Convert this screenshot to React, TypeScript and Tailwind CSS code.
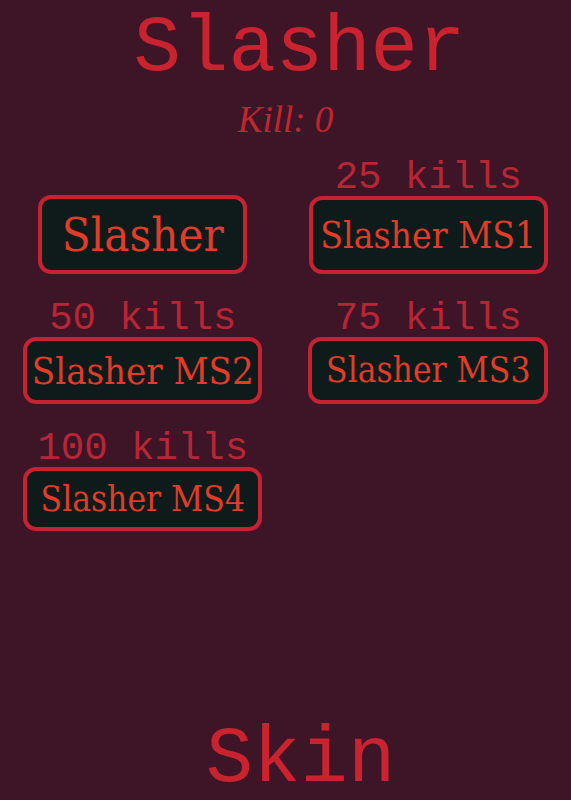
import React from "react";

type Skin = {
  name: string;
  kills?: number;
  size: string;
  text: string;
};

const skins: Skin[] = [
  { name: "Slasher", size: "w-[209px] h-[79px]", text: "text-[47px]" },
  { name: "Slasher MS1", kills: 25, size: "w-[239px] h-[78px]", text: "text-[37px]" },
  { name: "Slasher MS2", kills: 50, size: "w-[239px] h-[67px]", text: "text-[38px]" },
  { name: "Slasher MS3", kills: 75, size: "w-[240px] h-[67px]", text: "text-[35px]" },
  { name: "Slasher MS4", kills: 100, size: "w-[239px] h-[64px]", text: "text-[35px]" },
];

const serif = "font-['DejaVu_Serif_Condensed','DejaVu_Serif','Liberation_Serif',serif]";

function SkinCard({ skin }: { skin: Skin }) {
  return (
    <div className="flex flex-col items-center">
      {skin.kills !== undefined && (
        <div className="font-['Liberation_Mono',monospace] text-[39px] leading-[32px] text-[#b82535] mb-[2px]">
          {skin.kills} kills
        </div>
      )}
      <button
        className={`${skin.size} flex items-center justify-center rounded-[13px] border-[4px] border-[#c62232] bg-[#0f1b1a] ${serif} ${skin.text} leading-none text-[#e03c28]`}
      >
        {skin.name}
      </button>
    </div>
  );
}

export default function App() {
  return (
    <div className="flex min-h-[800px] w-full flex-col items-center bg-[#3d1527]">
      <h1 className="mt-[10px] ml-[28px] font-['Liberation_Mono',monospace] text-[79px] leading-none text-[#c8232f]">
        Slasher
      </h1>
      <p className="mt-[12px] font-['Liberation_Serif',serif] italic text-[37px] leading-none text-[#c02530]">
        Kill: 0
      </p>

      <div className="mt-[24px] grid w-full grid-cols-2 items-end gap-y-[29px]">
        {skins.map((s) => (
          <SkinCard key={s.name} skin={s} />
        ))}
      </div>

      <div className="mt-auto ml-[30px] font-['Liberation_Mono',monospace] text-[79px] leading-[80px] text-[#c8232f]">
        Skin
      </div>
    </div>
  );
}
